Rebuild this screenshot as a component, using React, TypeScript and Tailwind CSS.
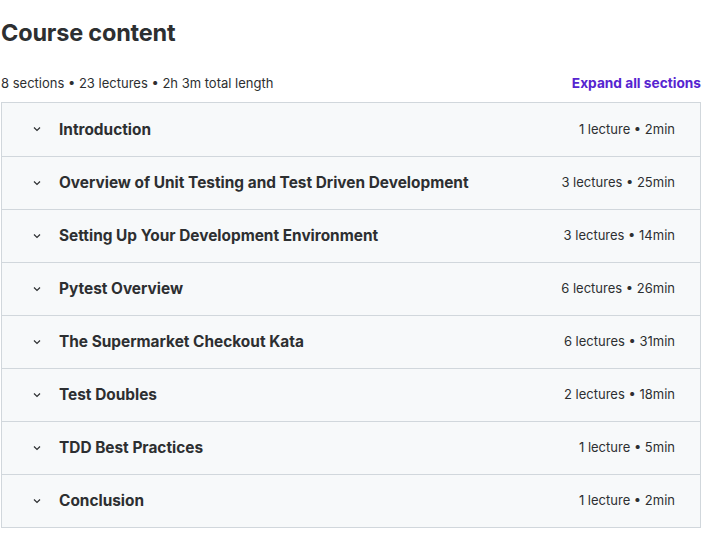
const sections = [
  { title: "Introduction", meta: "1 lecture • 2min" },
  { title: "Overview of Unit Testing and Test Driven Development", meta: "3 lectures • 25min" },
  { title: "Setting Up Your Development Environment", meta: "3 lectures • 14min" },
  { title: "Pytest Overview", meta: "6 lectures • 26min" },
  { title: "The Supermarket Checkout Kata", meta: "6 lectures • 31min" },
  { title: "Test Doubles", meta: "2 lectures • 18min" },
  { title: "TDD Best Practices", meta: "1 lecture • 5min" },
  { title: "Conclusion", meta: "1 lecture • 2min" },
];

function Chevron() {
  return (
    <svg width="12" height="12" viewBox="0 0 12 12" className="text-[#2d2f31]">
      <path d="M3 4.5 L6 7.5 L9 4.5" fill="none" stroke="currentColor" strokeWidth="1.2" />
    </svg>
  );
}

export default function App() {
  return (
    <div className="w-[717px] h-[534px] bg-white font-['Inter',sans-serif] text-[#2d2f31] pl-[1px]">
      <h2 className="pt-[18px] text-[23.5px] leading-[30px] font-bold tracking-[-0.2px]">Course content</h2>
      <div className="mt-[25px] flex items-center justify-between w-[700px] h-[20px]">
        <span className="text-[13px] leading-5">8 sections • 23 lectures • 2h 3m total length</span>
        <button className="text-[13.7px] leading-5 font-bold text-[#5624d0]">Expand all sections</button>
      </div>
      <div className="mt-[9px] w-[700px] border border-[#d1d7dc]">
        {sections.map((s, i) => (
          <div
            key={s.title}
            className={`flex items-center justify-between h-[53px] bg-[#f7f9fa] pl-[29px] pr-[25px] ${
              i > 0 ? "border-t border-[#d1d7dc]" : ""
            }`}
          >
            <div className="flex items-center gap-[16px]">
              <Chevron />
              <span className="text-[15.4px] font-bold">{s.title}</span>
            </div>
            <span className="text-[13px]">{s.meta}</span>
          </div>
        ))}
      </div>
    </div>
  );
}
